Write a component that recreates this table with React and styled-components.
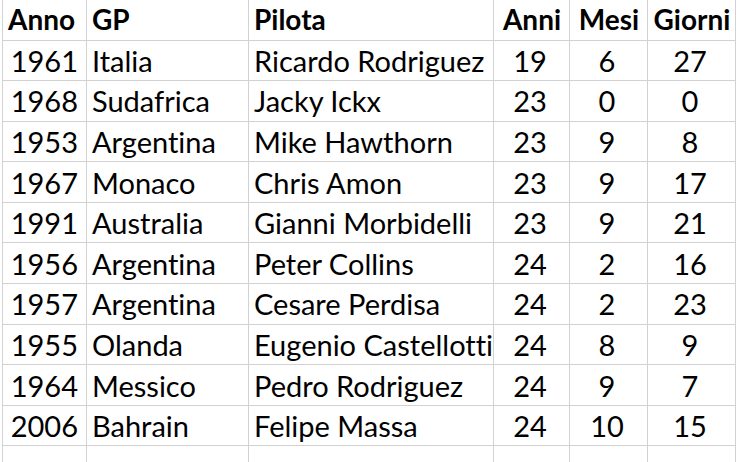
import React from 'react';
import styled, {createGlobalStyle} from 'styled-components';

const righe = [
	{anno: 1961, gp: 'Italia', pilota: 'Ricardo Rodriguez', anni: 19, mesi: 6, giorni: 27},
	{anno: 1968, gp: 'Sudafrica', pilota: 'Jacky Ickx', anni: 23, mesi: 0, giorni: 0},
	{anno: 1953, gp: 'Argentina', pilota: 'Mike Hawthorn', anni: 23, mesi: 9, giorni: 8},
	{anno: 1967, gp: 'Monaco', pilota: 'Chris Amon', anni: 23, mesi: 9, giorni: 17},
	{anno: 1991, gp: 'Australia', pilota: 'Gianni Morbidelli', anni: 23, mesi: 9, giorni: 21},
	{anno: 1956, gp: 'Argentina', pilota: 'Peter Collins', anni: 24, mesi: 2, giorni: 16},
	{anno: 1957, gp: 'Argentina', pilota: 'Cesare Perdisa', anni: 24, mesi: 2, giorni: 23},
	{anno: 1955, gp: 'Olanda', pilota: 'Eugenio Castellotti', anni: 24, mesi: 8, giorni: 9},
	{anno: 1964, gp: 'Messico', pilota: 'Pedro Rodriguez', anni: 24, mesi: 9, giorni: 7},
	{anno: 2006, gp: 'Bahrain', pilota: 'Felipe Massa', anni: 24, mesi: 10, giorni: 15},
];

const App = () => {
	return (
		<>
			<Globale />
			<Foglio>
				<Tabella>
					<colgroup>
						<col style={{width: 84}} />
						<col style={{width: 162}} />
						<col style={{width: 245}} />
						<col style={{width: 76}} />
						<col style={{width: 78}} />
						<col style={{width: 88}} />
					</colgroup>
					<thead>
						<tr>
							<Intestazione>Anno</Intestazione>
							<Intestazione>GP</Intestazione>
							<Intestazione>Pilota</Intestazione>
							<Intestazione centrato>Anni</Intestazione>
							<Intestazione centrato>Mesi</Intestazione>
							<Intestazione centrato>Giorni</Intestazione>
						</tr>
					</thead>
					<tbody>
						{righe.map((r) => (
							<Riga key={r.anno + r.pilota}>
								<Cella allinea="right">{r.anno}</Cella>
								<Cella>{r.gp}</Cella>
								<Cella>{r.pilota}</Cella>
								<Cella allinea="center">{r.anni}</Cella>
								<Cella allinea="center">{r.mesi}</Cella>
								<Cella allinea="center">{r.giorni}</Cella>
							</Riga>
						))}
						<RigaVuota>
							<Cella />
							<Cella />
							<Cella />
							<Cella />
							<Cella />
							<Cella />
						</RigaVuota>
					</tbody>
				</Tabella>
			</Foglio>
		</>
	);
}

const Globale = createGlobalStyle`
	html, body {
		margin: 0;
		background: #fff;
		overflow: hidden;
	}
	body {
		font-family: Lato, "Liberation Sans", sans-serif;
		font-variant-ligatures: none;
		color: #000;
	}
`;

const Foglio = styled.div`
	width: 738px;
	height: 462px;
	overflow: hidden;
	padding-left: 2px;
	box-sizing: border-box;
`;

const Tabella = styled.table`
	border-collapse: collapse;
	table-layout: fixed;
	width: 733px;
`;

const Intestazione = styled.th`
	height: 40px;
	padding: 0 4px 2px 5px;
	box-sizing: border-box;
	border: 1px solid #d2d2d2;
	border-top: none;
	font-size: 28px;
	font-weight: 700;
	text-align: ${(p) => (p.centrato ? 'center' : 'left')};
	white-space: nowrap;
	overflow: hidden;
`;

const Riga = styled.tr`
	height: 40.6px;
`;

const RigaVuota = styled.tr`
	height: 40px;
`;

const Cella = styled.td`
	padding: 0 8px 0 5px;
	border: 1px solid #d2d2d2;
	font-size: 29px;
	text-align: ${(p) => p.allinea || 'left'};
	white-space: nowrap;
	overflow: hidden;
`;

export default App;
